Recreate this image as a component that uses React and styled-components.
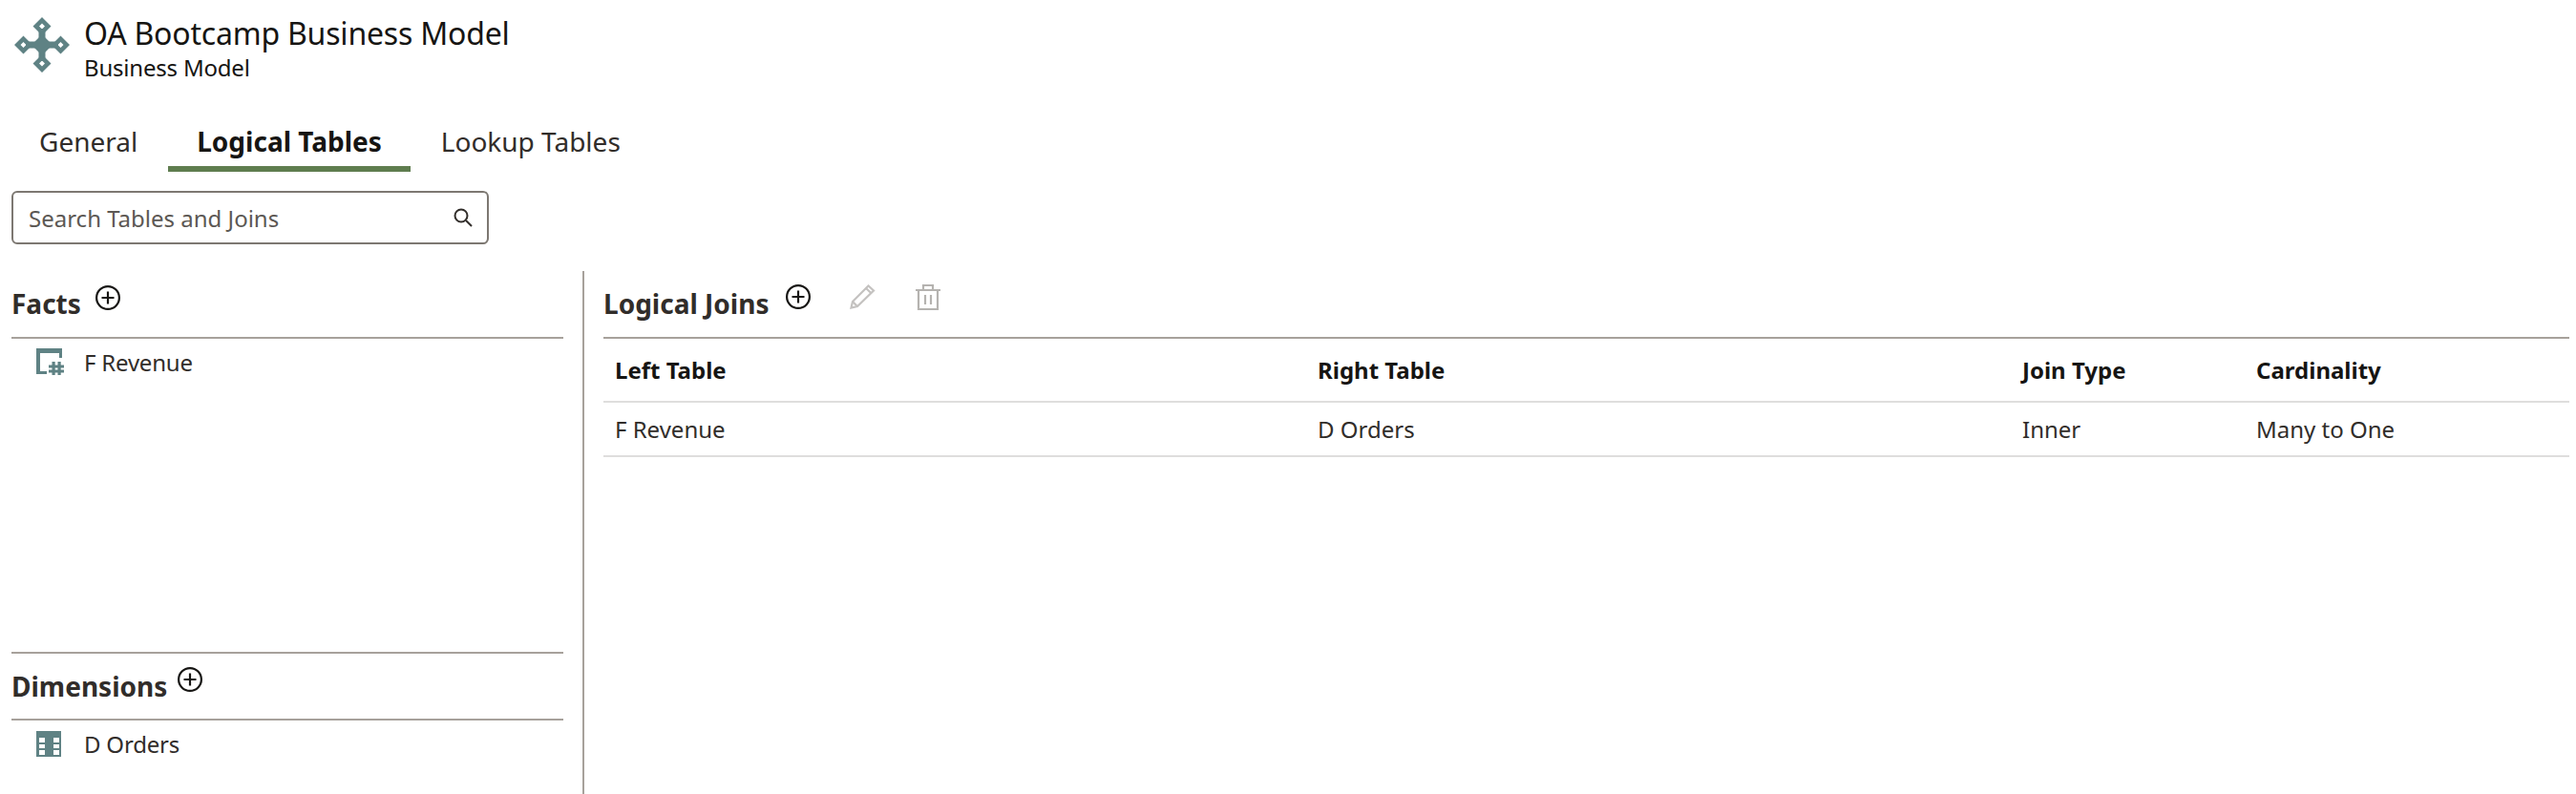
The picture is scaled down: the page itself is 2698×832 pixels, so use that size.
import React from 'react';
import styled, { createGlobalStyle } from 'styled-components';

const GlobalStyle = createGlobalStyle`
  html, body {
    margin: 0;
    padding: 0;
    background: #ffffff;
  }
  * {
    box-sizing: border-box;
  }
`;

const Page = styled.div`
  width: 2698px;
  height: 832px;
  overflow: hidden;
  font-family: 'Noto Sans', 'Open Sans', sans-serif;
  color: #312d2a;
  display: flex;
  flex-direction: column;
`;

const Header = styled.header`
  display: flex;
  align-items: flex-start;
  height: 118px;
  padding: 18px 0 0 15px;
`;

const TitleBlock = styled.div`
  margin-left: 15px;
  margin-top: -5px;
`;

const Title = styled.div`
  font-size: 32px;
  line-height: 44px;
  letter-spacing: -0.2px;
  color: #161513;
`;

const Subtitle = styled.div`
  font-size: 24px;
  line-height: 28px;
  letter-spacing: -0.2px;
  color: #161513;
`;

const Tabs = styled.nav`
  display: flex;
  gap: 2px;
  height: 62px;
  padding-left: 11px;
`;

const Tab = styled.div`
  display: flex;
  align-items: center;
  padding: 4px 30px 0;
  font-size: 28px;
  font-weight: ${(props) => (props.$active ? 700 : 400)};
  color: ${(props) => (props.$active ? '#161513' : '#312d2a')};
  border-bottom: 6px solid ${(props) => (props.$active ? '#5f7d4f' : 'transparent')};
  white-space: nowrap;
`;

const SearchRow = styled.div`
  height: 104px;
  padding: 20px 0 0 12px;
`;

const SearchBox = styled.div`
  width: 500px;
  height: 56px;
  border: 2px solid #7d7872;
  border-radius: 6px;
  display: flex;
  align-items: center;
  justify-content: space-between;
  padding: 0 15px 0 16px;
  font-size: 24px;
  color: #5c5854;
`;

const Body = styled.div`
  flex: 1;
  display: flex;
  min-height: 0;
`;

const LeftPanel = styled.aside`
  width: 612px;
  padding: 0 20px 0 12px;
  border-right: 2px solid #a7a19b;
  display: flex;
  flex-direction: column;
`;

const Section = styled.section`
  height: ${(props) => props.$height}px;
  border-top: ${(props) => (props.$bordered ? '2px solid #a7a19b' : 'none')};
`;

const SectionHeader = styled.div`
  height: ${(props) => props.$height}px;
  display: flex;
  align-items: flex-start;
  border-bottom: 2px solid #a7a19b;
  font-size: 28px;
  font-weight: 700;
  color: #312d2a;
`;

const SectionTitle = styled.span`
  line-height: 36px;
  margin-top: 16px;
`;

const IconButton = styled.span`
  display: inline-flex;
  margin-top: ${(props) => props.$top}px;
  margin-left: ${(props) => props.$left}px;
`;

const ListItem = styled.div`
  display: flex;
  align-items: center;
  height: 48px;
  padding-left: 26px;
  font-size: 24px;
  letter-spacing: -0.2px;
  color: #312d2a;
`;

const IconSlot = styled.span`
  display: inline-flex;
  width: 29px;
`;

const ListLabel = styled.span`
  margin-left: 21px;
`;

const RightPanel = styled.main`
  flex: 1;
  min-width: 0;
  padding-left: 20px;
  padding-right: 7px;
`;

const TableRow = styled.div`
  display: grid;
  grid-template-columns: 736px 738px 245px 1fr;
  align-items: center;
  height: ${(props) => props.$height}px;
  padding-left: 12px;
  border-bottom: 2px solid #dfdedd;
  font-size: 24px;
  font-weight: ${(props) => (props.$head ? 700 : 400)};
  color: ${(props) => (props.$head ? '#161513' : '#312d2a')};
`;

const PlusIcon = () => (
  <svg width="26" height="26" viewBox="0 0 26 26" fill="none" stroke="#161513" strokeWidth="2.2">
    <circle cx="13" cy="13" r="11.9" />
    <path d="M13 6.5v13M6.5 13h13" />
  </svg>
);

const PencilIcon = () => (
  <svg width="27" height="26" viewBox="0 0 27 26" fill="none" stroke="#c4c2c0" strokeWidth="2.2">
    <path d="M1.5 24.5l1.5-6.5L19.5 1.5l5.5 5L8 23z" />
    <path d="M17 4l5.5 5.2" />
    <path d="M3 18l5 5" />
  </svg>
);

const TrashIcon = () => (
  <svg width="26" height="27" viewBox="0 0 26 27" fill="none" stroke="#b5b3b0" strokeWidth="2.2">
    <path d="M0 6h26M8 6V1h10v5M3 6v20h20V6" />
    <path d="M10 11v10M16 11v10" />
  </svg>
);

const SearchIcon = () => (
  <svg width="20" height="20" viewBox="0 0 20 20" fill="none" stroke="#312d2a" strokeWidth="2">
    <circle cx="8" cy="8" r="6.5" />
    <path d="M13 13l6 6" />
  </svg>
);

const ModelIcon = () => (
  <svg width="58" height="58" viewBox="0 0 58 58">
    <g fill="#5f8284">
      <path d="M25.500 12h7v34h-7zM12 25.500h34v7H12z" />
      <path fillRule="evenodd" d="M29 0l9.500 9.500L29 19l-9.500-9.500zM29 6.500L26 9.500l3 3 3-3z" />
      <path fillRule="evenodd" d="M29 39l9.500 9.500L29 58l-9.500-9.500zM29 45.500l-3 3 3 3 3-3z" />
      <path fillRule="evenodd" d="M9.500 19.500L19 29l-9.500 9.500L0 29zM9.500 26l-3 3 3 3 3-3z" />
      <path fillRule="evenodd" d="M48.500 19.500L58 29l-9.500 9.500L39 29zM48.500 26l-3 3 3 3 3-3z" />
      <path fillRule="evenodd" d="M29 18l11 11-11 11-11-11zM29 24.500L24.500 29l4.500 4.500 4.500-4.500z" />
    </g>
  </svg>
);

const FactIcon = () => (
  <svg width="29" height="28" viewBox="0 0 29 28">
    <g fill="#5f8284">
      <path d="M0 0h27v5H0zM0 5h4v22H0zM0 24h11v3H0zM24 5h3v5h-3z" />
      <path d="M13 17.500h16v3H13zM13 22.500h16v3H13zM16.500 14h3.200v14h-3.200zM22.500 14h3.200v14h-3.200z" />
    </g>
  </svg>
);

const DimensionIcon = () => (
  <svg width="26" height="27" viewBox="0 0 26 27">
    <path
      fill="#5f8284"
      fillRule="evenodd"
      d="M0 0h26v27H0zM3 7v5h6V7zM18 7v5h6V7zM3 14v4h6v-4zM18 14v4h6v-4zM3 20v5h6v-5zM18 20v5h6v-5z"
    />
  </svg>
);

const columns = ['Left Table', 'Right Table', 'Join Type', 'Cardinality'];
const joins = [['F Revenue', 'D Orders', 'Inner', 'Many to One']];

export default function App() {
  return (
    <Page>
      <GlobalStyle />
      <Header>
        <ModelIcon />
        <TitleBlock>
          <Title>OA Bootcamp Business Model</Title>
          <Subtitle>Business Model</Subtitle>
        </TitleBlock>
      </Header>
      <Tabs>
        <Tab>General</Tab>
        <Tab $active>Logical Tables</Tab>
        <Tab>Lookup Tables</Tab>
      </Tabs>
      <SearchRow>
        <SearchBox>
          Search Tables and Joins
          <SearchIcon />
        </SearchBox>
      </SearchRow>
      <Body>
        <LeftPanel>
          <Section $height={399}>
            <SectionHeader $height={71}>
              <SectionTitle>Facts</SectionTitle>
              <IconButton $top={15} $left={15}>
                <PlusIcon />
              </IconButton>
            </SectionHeader>
            <ListItem>
              <IconSlot>
                <FactIcon />
              </IconSlot>
              <ListLabel>F Revenue</ListLabel>
            </ListItem>
          </Section>
          <Section $bordered $height={149}>
            <SectionHeader $height={70}>
              <SectionTitle>Dimensions</SectionTitle>
              <IconButton $top={14} $left={11}>
                <PlusIcon />
              </IconButton>
            </SectionHeader>
            <ListItem>
              <IconSlot>
                <DimensionIcon />
              </IconSlot>
              <ListLabel>D Orders</ListLabel>
            </ListItem>
          </Section>
        </LeftPanel>
        <RightPanel>
          <SectionHeader $height={71}>
            <SectionTitle>Logical Joins</SectionTitle>
            <IconButton $top={14} $left={18}>
              <PlusIcon />
            </IconButton>
            <IconButton $top={14} $left={41}>
              <PencilIcon />
            </IconButton>
            <IconButton $top={14} $left={42}>
              <TrashIcon />
            </IconButton>
          </SectionHeader>
          <TableRow $head $height={67}>
            {columns.map((name) => (
              <span key={name}>{name}</span>
            ))}
          </TableRow>
          {joins.map((row) => (
            <TableRow key={row.join('-')} $height={57}>
              {row.map((cell) => (
                <span key={cell}>{cell}</span>
              ))}
            </TableRow>
          ))}
        </RightPanel>
      </Body>
    </Page>
  );
}
